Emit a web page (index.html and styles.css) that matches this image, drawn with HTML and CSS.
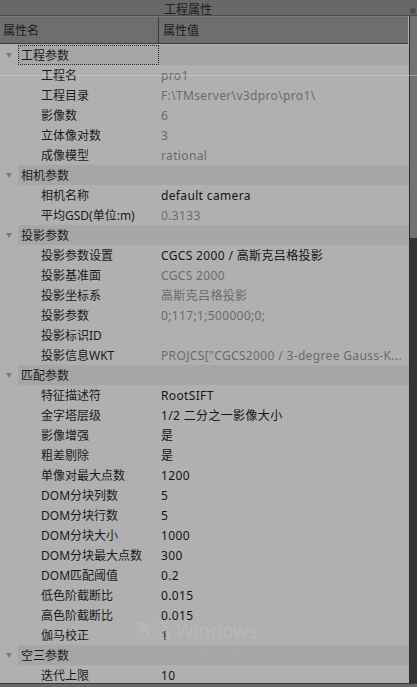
FILE: index.html
```html
<!DOCTYPE html>
<html lang="zh">
<head>
<meta charset="utf-8">
<title>工程属性</title>
<link rel="stylesheet" href="styles.css">
</head>
<body>
<div class="window">
  <div class="title">工程属性<span class="float-icon"></span></div>
  <div class="main">
    <div class="table">
      <div class="header">
        <div class="hcell hname">属性名</div>
        <div class="hcell hval">属性值</div>
      </div>
      <div class="rows">
        <div class="group"><span class="arrow"></span><div class="gbar"><span class="glabel focus">工程参数</span></div></div>
        <div class="row"><span class="name">工程名</span><span class="val ro">pro1</span></div>
        <div class="row"><span class="name">工程目录</span><span class="val ro">F:\TMserver\v3dpro\pro1\</span></div>
        <div class="row"><span class="name">影像数</span><span class="val ro">6</span></div>
        <div class="row"><span class="name">立体像对数</span><span class="val ro">3</span></div>
        <div class="row"><span class="name">成像模型</span><span class="val ro">rational</span></div>
        <div class="group"><span class="arrow"></span><div class="gbar"><span class="glabel">相机参数</span></div></div>
        <div class="row"><span class="name">相机名称</span><span class="val">default camera</span></div>
        <div class="row"><span class="name">平均GSD(单位:m)</span><span class="val ro">0.3133</span></div>
        <div class="group"><span class="arrow"></span><div class="gbar"><span class="glabel">投影参数</span></div></div>
        <div class="row"><span class="name">投影参数设置</span><span class="val">CGCS 2000 / 高斯克吕格投影</span></div>
        <div class="row"><span class="name">投影基准面</span><span class="val ro">CGCS 2000</span></div>
        <div class="row"><span class="name">投影坐标系</span><span class="val ro">高斯克吕格投影</span></div>
        <div class="row"><span class="name">投影参数</span><span class="val ro">0;117;1;500000;0;</span></div>
        <div class="row"><span class="name">投影标识ID</span><span class="val ro"></span></div>
        <div class="row"><span class="name">投影信息WKT</span><span class="val ro">PROJCS["CGCS2000 / 3-degree Gauss-K...</span></div>
        <div class="group"><span class="arrow"></span><div class="gbar"><span class="glabel">匹配参数</span></div></div>
        <div class="row"><span class="name">特征描述符</span><span class="val">RootSIFT</span></div>
        <div class="row"><span class="name">金字塔层级</span><span class="val">1/2 二分之一影像大小</span></div>
        <div class="row"><span class="name">影像增强</span><span class="val">是</span></div>
        <div class="row"><span class="name">粗差剔除</span><span class="val">是</span></div>
        <div class="row"><span class="name">单像对最大点数</span><span class="val">1200</span></div>
        <div class="row"><span class="name">DOM分块列数</span><span class="val">5</span></div>
        <div class="row"><span class="name">DOM分块行数</span><span class="val">5</span></div>
        <div class="row"><span class="name">DOM分块大小</span><span class="val">1000</span></div>
        <div class="row"><span class="name">DOM分块最大点数</span><span class="val">300</span></div>
        <div class="row"><span class="name">DOM匹配阈值</span><span class="val">0.2</span></div>
        <div class="row"><span class="name">低色阶截断比</span><span class="val">0.015</span></div>
        <div class="row"><span class="name">高色阶截断比</span><span class="val">0.015</span></div>
        <div class="row"><span class="name">伽马校正</span><span class="val">1</span></div>
        <div class="group"><span class="arrow"></span><div class="gbar"><span class="glabel">空三参数</span></div></div>
        <div class="row"><span class="name">迭代上限</span><span class="val">10</span></div>
      </div>
    </div>
    <div class="scroll">
      <div class="thumb"></div>
    </div>
  </div>
  <div class="bottom"></div>
  <div class="splitline"></div>
  <div class="watermark">激活 Windows</div>
  <div class="watermark2">转到“设置”以激活 Windows。</div>
</div>
</body>
</html>
```
FILE: styles.css
```css
html, body {
  margin: 0;
  padding: 0;
}
body {
  width: 417px;
  height: 687px;
  overflow: hidden;
  background: #6a6a6a;
  font-family: "Noto Sans", "Noto Sans CJK SC", sans-serif;
  font-size: 12px;
  color: #1b1b1b;
}
.window {
  position: relative;
  width: 417px;
  height: 687px;
  display: flex;
  flex-direction: column;
}
.title {
  position: relative;
  height: 15px;
  line-height: 20px;
  padding-left: 164px;
  overflow: hidden;
  background: #686868;
  border-bottom: 1px solid #4c4c4c;
  color: #1e1e1e;
  flex: none;
}
.float-icon {
  position: absolute;
  right: 1px;
  top: 8px;
  width: 4px;
  height: 4px;
  background: #4a4a4a;
  border: 1px solid #575757;
}
.main {
  display: flex;
  height: 667px;
  flex: none;
}
.table {
  width: 410px;
  display: flex;
  flex-direction: column;
  background: #b0b0b0;
  overflow: hidden;
}
.header {
  display: flex;
  height: 26px;
  background: #6e6e6e;
  border-top: 1px solid #7a7a7a;
  border-bottom: 1px solid #3a3a3a;
  margin-right: 1px;
  flex: none;
}
.hcell {
  line-height: 27px;
  color: #1c1c1c;
}
.hname {
  width: 155px;
  padding-left: 3px;
  border-right: 1px solid #3c3c3c;
}
.hval {
  padding-left: 4px;
}
.rows {
  padding-top: 1px;
  display: flex;
  flex-direction: column;
}
.row, .group {
  height: 20px;
  display: flex;
  align-items: stretch;
  flex: none;
}
.row {
  line-height: 22px;
}
.name {
  width: 120px;
  padding-left: 41px;
  white-space: nowrap;
  color: #1b1b1b;
}
.val {
  white-space: nowrap;
  color: #151515;
  letter-spacing: 0.35px;
}
.val.ro {
  color: #6b6b6b;
}
.arrow {
  width: 18px;
  position: relative;
}
.arrow::after {
  content: "";
  position: absolute;
  left: 6px;
  top: 8px;
  border-left: 3px solid transparent;
  border-right: 3px solid transparent;
  border-top: 5px solid #7c7c7c;
}
.gbar {
  width: 391px;
  background: #a6a6a6;
  display: flex;
}
.glabel {
  width: 137px;
  height: 18px;
  padding-left: 2px;
  color: #1b1b1b;
  border: 1px dotted transparent;
  line-height: 20px;
}
.glabel.focus {
  border-color: #2e2e2e;
}
.scroll {
  width: 7px;
  border-left: 1px solid #2e2e2e;
  background: #343434;
  display: flex;
  flex-direction: column;
}
.thumb {
  height: 222px;
  background: #737373;
}
.bottom {
  height: 4px;
  border-top: 1px solid #3a3a3a;
  background: #6a6a6a;
  flex: none;
}
.splitline {
  position: absolute;
  left: 0;
  top: 75px;
  width: 417px;
  height: 1px;
  background: rgba(220, 220, 220, 0.45);
}
.watermark {
  position: absolute;
  left: 133px;
  top: 619px;
  font-size: 19px;
  line-height: 24px;
  color: rgba(200, 200, 200, 0.35);
  white-space: nowrap;
}
.watermark2 {
  position: absolute;
  left: 160px;
  top: 647px;
  font-size: 12px;
  line-height: 18px;
  color: rgba(190, 190, 190, 0.12);
  white-space: nowrap;
}
```
